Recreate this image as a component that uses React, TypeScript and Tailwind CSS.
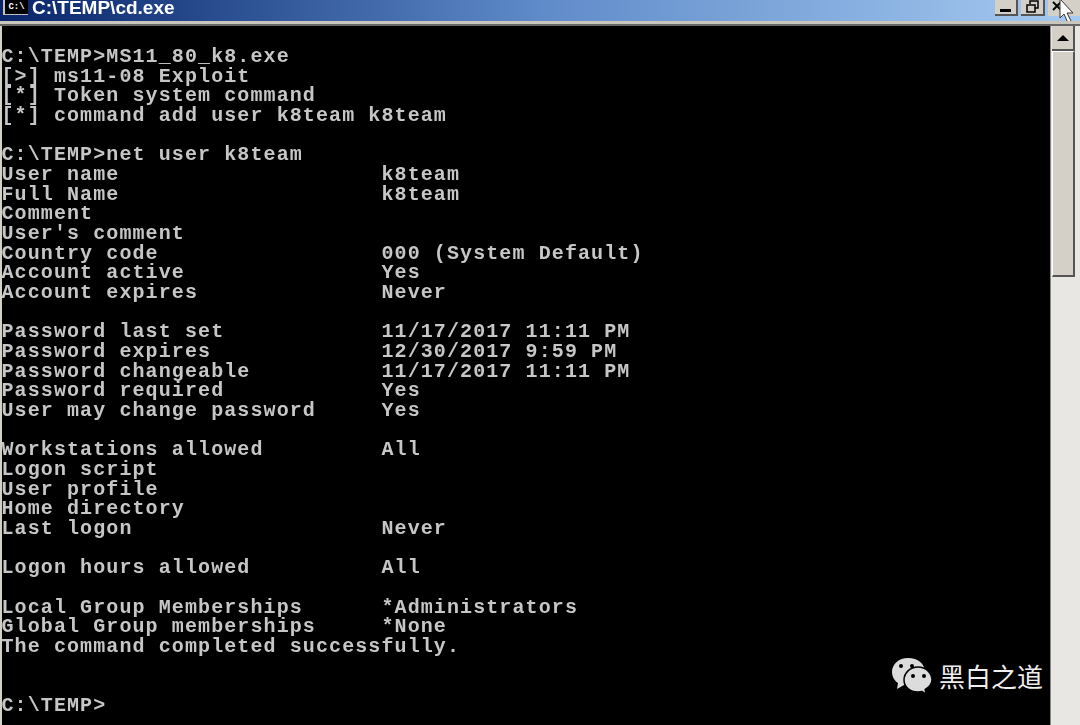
const lines = `
C:\\TEMP>MS11_80_k8.exe
[>] ms11-08 Exploit
[*] Token system command
[*] command add user k8team k8team

C:\\TEMP>net user k8team
User name                    k8team
Full Name                    k8team
Comment
User's comment
Country code                 000 (System Default)
Account active               Yes
Account expires              Never

Password last set            11/17/2017 11:11 PM
Password expires             12/30/2017 9:59 PM
Password changeable          11/17/2017 11:11 PM
Password required            Yes
User may change password     Yes

Workstations allowed         All
Logon script
User profile
Home directory
Last logon                   Never

Logon hours allowed          All

Local Group Memberships      *Administrators
Global Group memberships     *None
The command completed successfully.


C:\\TEMP>`;

function WeChatIcon() {
  return (
    <svg width="42" height="37" viewBox="0 0 42 37">
      <path d="M17 1C8 1 1 7 1 15c0 5 3 9 6 11l-1 6 7-4c2 .4 3 .5 5 .5C28 28.500 34 22 34 15 34 7 27 1 17 1z" fill="#dcdcdc" />
      <path d="M27 10c-8 0-14 6-14 13s6 12 14 12c1.500 0 3-.2 4-.5l4 2.500-.8-4.500C38 30 41 27 41 23c0-7-6-13-14-13z" fill="#dcdcdc" stroke="#000" strokeWidth="1.500" />
      <circle cx="10" cy="9" r="2" fill="#000" />
      <circle cx="21" cy="9" r="2" fill="#000" />
      <circle cx="22" cy="19" r="2" fill="#000" />
      <circle cx="33" cy="19" r="2" fill="#000" />
    </svg>
  );
}

export default function App() {
  return (
    <div className="w-[1080px] h-[725px] overflow-hidden flex flex-col bg-[#d4d0c8]">
      <div className="h-[21px] flex items-start justify-between bg-gradient-to-r from-[#0a246a] via-[#5f8bc9] to-[#a6caf0] shrink-0">
        <div className="flex items-start gap-[4px] pl-[3px]">
          <div className="w-[25px] h-[15px] bg-black border-l-2 border-b border-[#c0c0c0] flex items-center justify-center text-white text-[9px] leading-none font-bold font-['Liberation_Mono',monospace]">
            C:\
          </div>
          <span className="text-white font-bold text-[19px] leading-[15px] font-['Liberation_Sans',sans-serif] blur-[0.4px]">C:\TEMP\cd.exe</span>
        </div>
        <div className="flex items-start gap-[3px] -mt-[1px]">
          <div className="w-[23px] h-[17px] bg-[#d4d0c8] border-r-2 border-b-2 border-[#555] flex items-end justify-center pb-[2px]">
            <div className="w-[11px] h-[3px] bg-black"></div>
          </div>
          <div className="w-[24px] h-[17px] bg-[#d4d0c8] border-r-2 border-b-2 border-[#555] flex items-center justify-center">
            <svg width="13" height="13" viewBox="0 0 13 13" fill="none" stroke="#000" strokeWidth="1.500">
              <path d="M4 4V1h8v7H9" />
              <path d="M1 5h8v7H1z" />
            </svg>
          </div>
          <div className="w-[32px] h-[17px] bg-[#d4d0c8] flex items-start pl-[3px]">
            <svg width="26" height="26" viewBox="0 0 26 26" className="shrink-0">
              <path d="M2 3l8 8M10 3l-8 8" stroke="#000" strokeWidth="2" />
              <path d="M9 0l13 14h-6l4 8-3 2-4-9-4 4z" fill="#fff" stroke="#333" strokeWidth="1" />
            </svg>
          </div>
        </div>
      </div>
      <div className="h-[5px] shrink-0 bg-[#c9c6be] border-b-2 border-[#666]"></div>
      <div className="flex-1 flex min-h-0 pl-[2px] relative">
        <pre className="flex-1 bg-black text-[#c6c6c6] font-['Liberation_Mono',monospace] font-bold text-[20px] leading-[19.65px] tracking-[1.1px] overflow-hidden whitespace-pre pt-[1.5px] -ml-[0.5px] blur-[0.4px]">{lines}</pre>
        <div className="w-[30px] shrink-0 flex flex-col bg-[#e8e7e3] border-l border-[#888]">
          <div className="ml-[1px] mr-[5px] h-[25px] bg-[#d4d0c8] border-r-2 border-b-2 border-[#555] flex items-center justify-center">
            <div className="w-0 h-0 border-l-[6px] border-r-[6px] border-b-[6px] border-l-transparent border-r-transparent border-b-black"></div>
          </div>
          <div className="ml-[1px] mr-[5px] h-[226px] bg-[#d4d0c8] border-r-2 border-b-2 border-[#555] border-t border-l border-t-white border-l-white"></div>
        </div>
        <div className="absolute left-[891px] top-[631px] flex items-center gap-[6px]">
          <WeChatIcon />
          <span className="text-[#eeeeee] text-[26px] leading-none font-['Noto_Sans_CJK_SC',sans-serif]">黑白之道</span>
        </div>
      </div>
    </div>
  );
}
